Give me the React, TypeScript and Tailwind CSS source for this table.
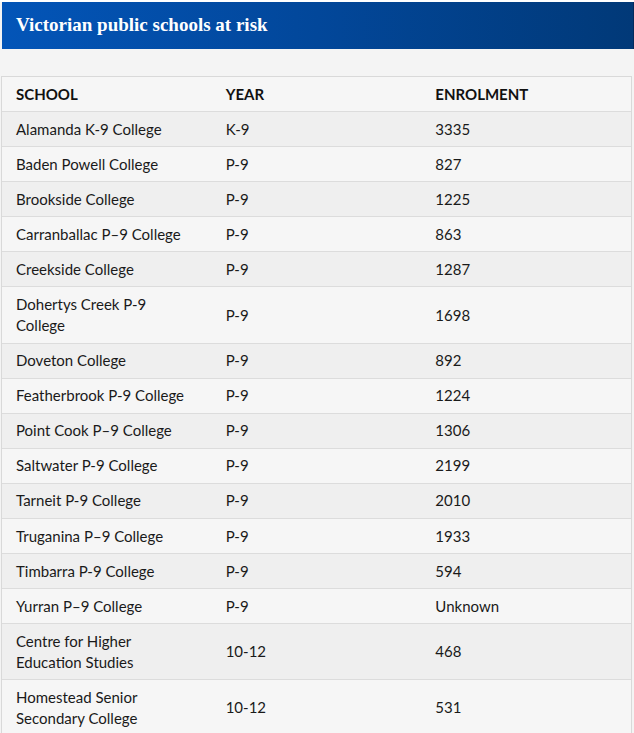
const rows: [string, string, string][] = [
  ['Alamanda K-9 College', 'K-9', '3335'],
  ['Baden Powell College', 'P-9', '827'],
  ['Brookside College', 'P-9', '1225'],
  ['Carranballac P–9 College', 'P-9', '863'],
  ['Creekside College', 'P-9', '1287'],
  ['Dohertys Creek P-9 College', 'P-9', '1698'],
  ['Doveton College', 'P-9', '892'],
  ['Featherbrook P-9 College', 'P-9', '1224'],
  ['Point Cook P–9 College', 'P-9', '1306'],
  ['Saltwater P-9 College', 'P-9', '2199'],
  ['Tarneit P-9 College', 'P-9', '2010'],
  ['Truganina P–9 College', 'P-9', '1933'],
  ['Timbarra P-9 College', 'P-9', '594'],
  ['Yurran P–9 College', 'P-9', 'Unknown'],
  ['Centre for Higher Education Studies', '10-12', '468'],
  ['Homestead Senior Secondary College', '10-12', '531'],
]

export default function App() {
  return (
    <div className="w-[634px] h-[733px] overflow-hidden bg-white pt-[2px]">
      <div className="bg-[#f4f4f4] h-full">
        {/* Title bar */}
        <div className="ml-[2px] h-[47px] flex items-center px-[14px] bg-gradient-to-r from-[#0355b8] via-[#02479a] to-[#013978] border-r border-[#022a5c]">
          <h1 className="text-white text-[19px] font-bold font-['Liberation_Serif',serif]">
            Victorian public schools at risk
          </h1>
        </div>

        {/* Table */}
        <div className="mt-[27px] ml-[1px] w-[631px] border-t border-l border-r border-[#d9d9d9] font-['Lato',sans-serif] text-[15px] leading-[21px]">
          <div className="grid grid-cols-3 bg-[#f6f6f6] border-b border-[#dcdcdc] font-bold text-[#111] uppercase">
            <div className="pl-[14px] pr-3 py-[6.5px]">School</div>
            <div className="pl-[14px] pr-3 py-[6.5px]">Year</div>
            <div className="pl-[14px] pr-3 py-[6.5px]">Enrolment</div>
          </div>
          {rows.map(([school, year, count], i) => (
            <div
              key={school}
              className={`grid grid-cols-3 items-center border-b border-[#dcdcdc] text-[#1a1a1a] ${
                i % 2 === 0 ? 'bg-[#efefef]' : 'bg-[#f6f6f6]'
              }`}
            >
              <div className="pl-[14px] pr-[15px] py-[6.55px]">{school}</div>
              <div className="pl-[14px] pr-3 py-[6.55px]">{year}</div>
              <div className="pl-[14px] pr-3 py-[6.55px]">{count}</div>
            </div>
          ))}
        </div>
      </div>
    </div>
  )
}
